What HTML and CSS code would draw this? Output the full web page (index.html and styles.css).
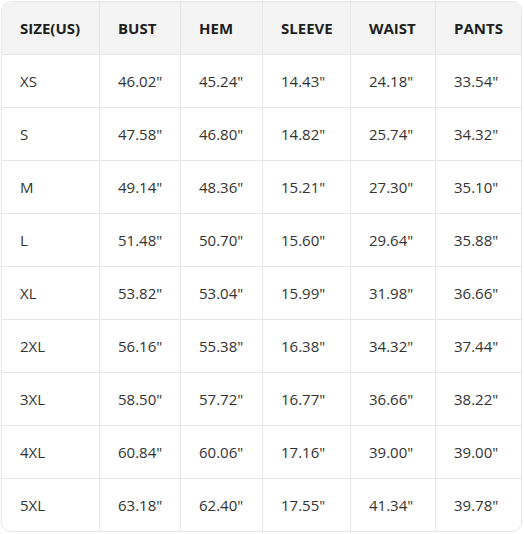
FILE: index.html
```html
<!DOCTYPE html>
<html lang="en">
<head>
<meta charset="utf-8">
<title>Size Chart</title>
<link rel="stylesheet" href="styles.css">
</head>
<body>
<div class="wrap">
<table class="size-table">
  <colgroup>
    <col class="c1"><col class="c2"><col class="c3"><col class="c4"><col class="c5"><col class="c6">
  </colgroup>
  <thead>
    <tr><th>SIZE(US)</th><th>BUST</th><th>HEM</th><th>SLEEVE</th><th>WAIST</th><th>PANTS</th></tr>
  </thead>
  <tbody>
    <tr><td>XS</td><td>46.02"</td><td>45.24"</td><td>14.43"</td><td>24.18"</td><td>33.54"</td></tr>
    <tr><td>S</td><td>47.58"</td><td>46.80"</td><td>14.82"</td><td>25.74"</td><td>34.32"</td></tr>
    <tr><td>M</td><td>49.14"</td><td>48.36"</td><td>15.21"</td><td>27.30"</td><td>35.10"</td></tr>
    <tr><td>L</td><td>51.48"</td><td>50.70"</td><td>15.60"</td><td>29.64"</td><td>35.88"</td></tr>
    <tr><td>XL</td><td>53.82"</td><td>53.04"</td><td>15.99"</td><td>31.98"</td><td>36.66"</td></tr>
    <tr><td>2XL</td><td>56.16"</td><td>55.38"</td><td>16.38"</td><td>34.32"</td><td>37.44"</td></tr>
    <tr><td>3XL</td><td>58.50"</td><td>57.72"</td><td>16.77"</td><td>36.66"</td><td>38.22"</td></tr>
    <tr><td>4XL</td><td>60.84"</td><td>60.06"</td><td>17.16"</td><td>39.00"</td><td>39.00"</td></tr>
    <tr><td>5XL</td><td>63.18"</td><td>62.40"</td><td>17.55"</td><td>41.34"</td><td>39.78"</td></tr>
  </tbody>
</table>
</div>
</body>
</html>
```
FILE: styles.css
```css
html, body {
  margin: 0;
  padding: 0;
  background: #ffffff;
}
.wrap {
  padding: 1px 0 0 1px;
}
.size-table {
  border-collapse: separate;
  border-spacing: 0;
  table-layout: fixed;
  width: 521px;
  border: 1px solid #e6e6e6;
  border-radius: 10px;
  overflow: hidden;
  font-family: "Open Sans", "Liberation Sans", sans-serif;
  font-size: 15px;
  color: #333333;
}
.c1 { width: 98px; }
.c2 { width: 81px; }
.c3 { width: 82px; }
.c4 { width: 88px; }
.c5 { width: 85px; }
.c6 { width: 85px; }
.size-table th,
.size-table td {
  text-align: left;
  padding: 0 0 0 18px;
  border-right: 1px solid #e6e6e6;
  border-bottom: 1px solid #e6e6e6;
  white-space: nowrap;
  box-sizing: border-box;
}
.size-table th:last-child,
.size-table td:last-child {
  border-right: none;
}
.size-table tbody tr:last-child td {
  border-bottom: none;
}
.size-table th {
  height: 53px;
  background: #f3f3f3;
  color: #1e1e1e;
  font-weight: 700;
}
.size-table td {
  height: 53px;
  font-weight: 400;
}
.size-table tbody tr:last-child td {
  height: 52px;
}
```
